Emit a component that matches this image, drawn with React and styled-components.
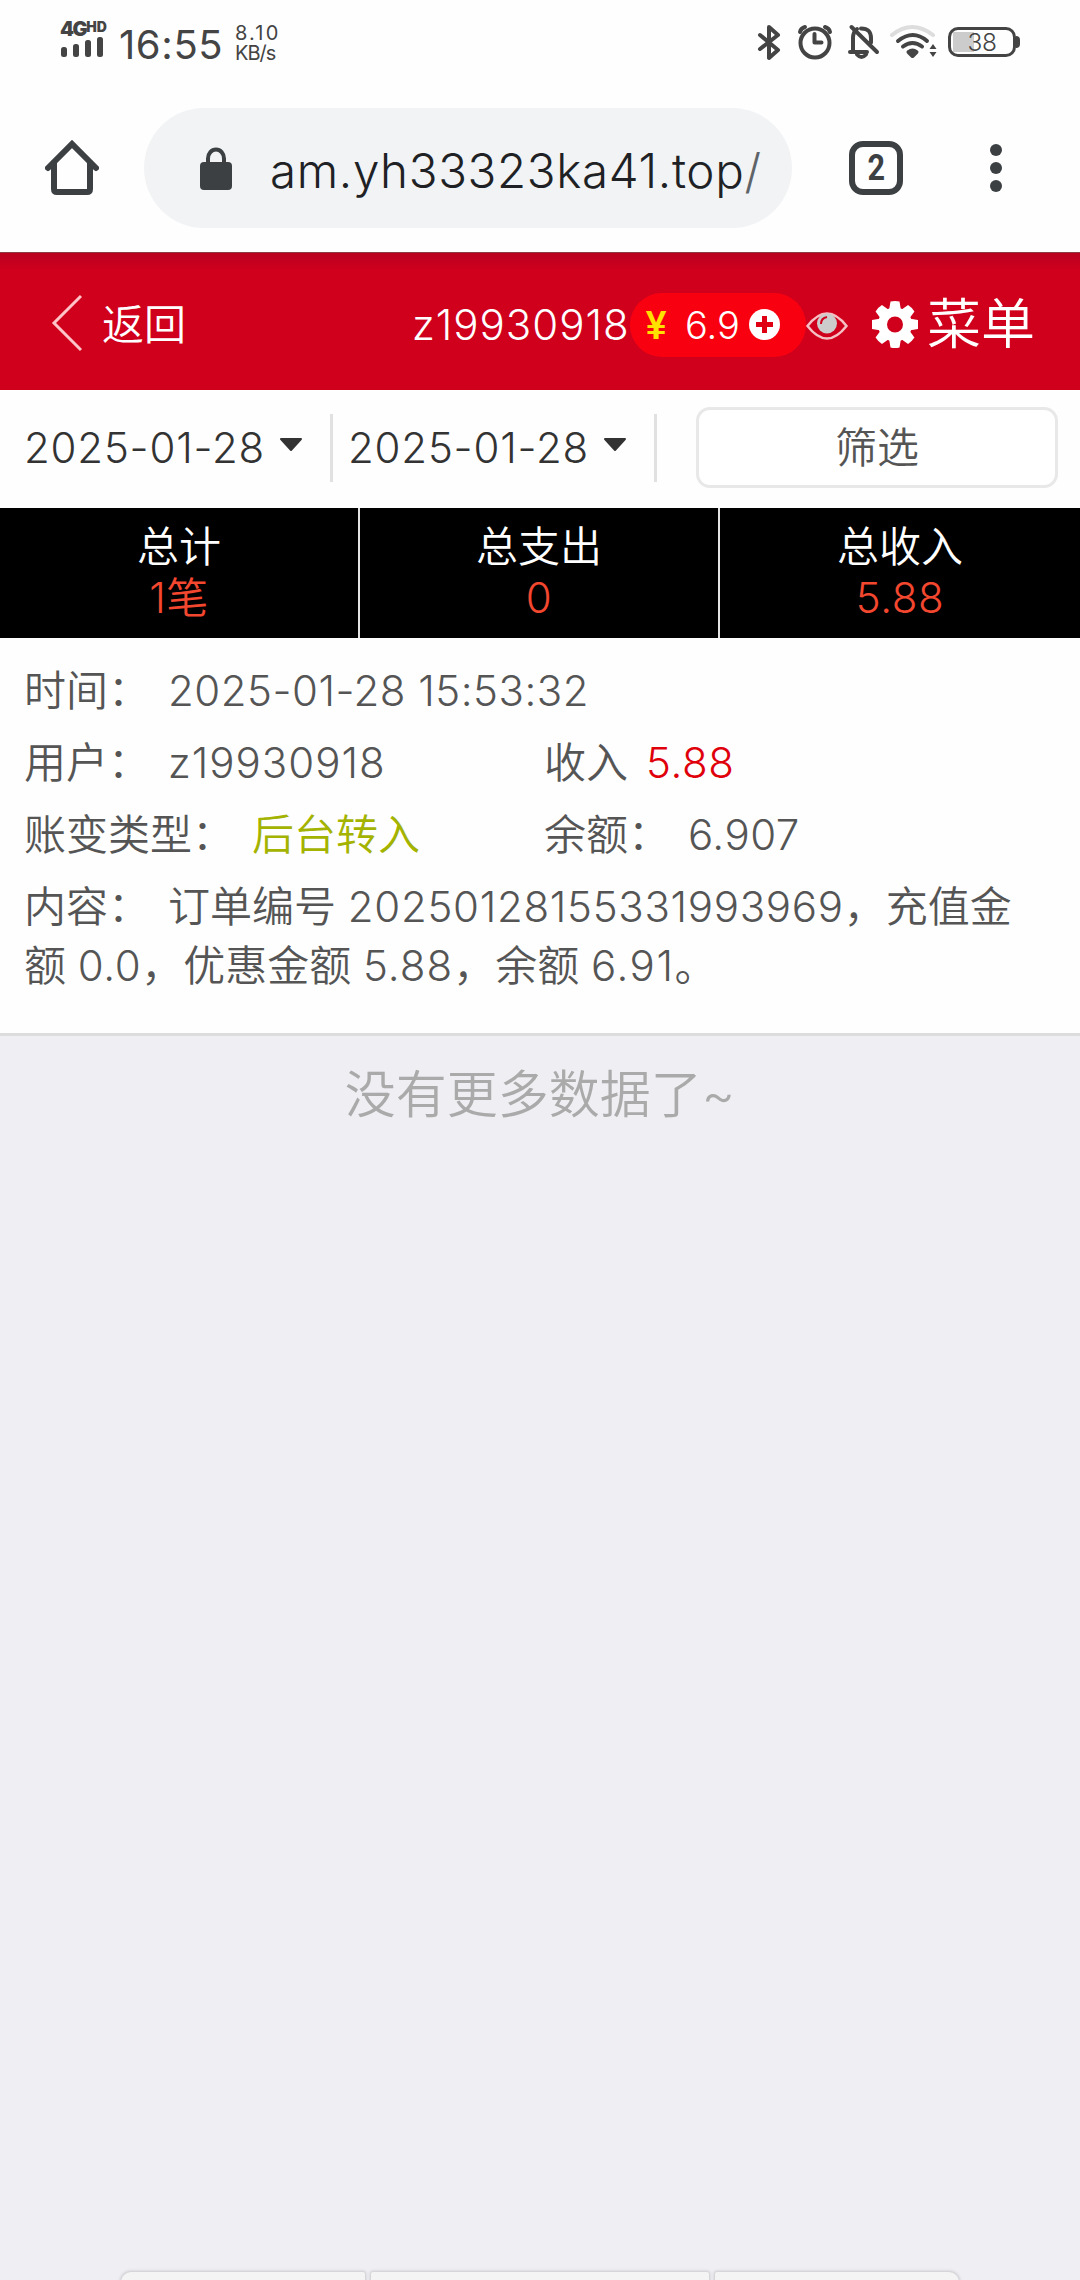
import React from "react";
import styled, { createGlobalStyle } from "styled-components";

const GlobalStyle = createGlobalStyle`
  * {
    box-sizing: border-box;
  }

  body {
    margin: 0;
    background: #efeef3;
    font-family: Inter, "Noto Sans CJK SC", sans-serif;
    font-weight: 350;
  }
`;

const Page = styled.div`
  display: flex;
  flex-direction: column;
  width: 1080px;
  height: 2280px;
  overflow: hidden;
`;

const Text = styled.span`
  color: ${({ color }) => color || "inherit"};
  letter-spacing: ${({ $spacing }) => $spacing || 0}px;
  white-space: pre;
`;

/* status bar */

const StatusBar = styled.div`
  display: flex;
  height: 88px;
  padding: 20px 65px 0 60px;
  background: #fefefe;
  color: #444;
`;

const Signal = styled.div`
  width: 59px;
`;

const Network = styled.div`
  display: flex;
  height: 17px;
  font-size: 20px;
  font-weight: 900;
  line-height: 19px;
  letter-spacing: -1.5px;

  sup {
    font-size: 14px;
    line-height: 13px;
    letter-spacing: 0;
    vertical-align: top;
  }
`;

const Clock = styled.div`
  width: 116px;
  font-size: 40px;
  font-weight: 400;
  line-height: 50px;
`;

const Speed = styled.div`
  flex: 1;
  padding-top: 4px;
  font-size: 20px;
  font-weight: 400;
  line-height: 19.5px;
`;

const StatusIcons = styled.svg`
  display: block;
  width: 200px;
  height: 44px;
  margin-right: -34px;
`;

const Battery = styled.div`
  display: flex;
  align-items: center;
  justify-content: center;
  position: relative;
  width: 68px;
  height: 30px;
  margin: 7px -1px 0 32px;
  border: 3px solid #444;
  border-radius: 10px;
  background: linear-gradient(#ccc, #ccc) 2px 2px / 21px 20px no-repeat;
  font-size: 24.5px;
  letter-spacing: -0.5px;
  line-height: 24px;

  &::after {
    content: "";
    position: absolute;
    right: -7px;
    top: 6px;
    width: 4px;
    height: 12px;
    border-radius: 0 4px 4px 0;
    background: #444;
  }
`;

/* browser bar */

const BrowserBar = styled.div`
  display: flex;
  align-items: center;
  height: 164px;
  padding: 0 66px 4px 45px;
  background: #fefefe;
`;

const HomeIcon = styled.svg`
  width: 54px;
  height: 56px;
`;

const AddressBar = styled.div`
  display: flex;
  align-items: center;
  width: 648px;
  height: 120px;
  margin-left: 45px;
  padding-left: 56px;
  border-radius: 60px;
  background: #f1f3f5;
  color: #202124;
  font-size: 47.5px;
  line-height: 60px;
`;

const LockIcon = styled.svg`
  width: 32px;
  height: 43px;
  margin-right: 38px;
`;

const Url = styled.div`
  padding-top: 5px;
  letter-spacing: 0.65px;
  white-space: nowrap;
`;

const TabCount = styled.div`
  display: flex;
  align-items: center;
  justify-content: center;
  width: 54px;
  height: 54px;
  margin-left: 57px;
  border: 6px solid #3c4043;
  border-radius: 14px;
  color: #3c4043;
  font-family: Roboto, sans-serif;
  font-size: 36px;
  font-weight: 700;

  span {
    transform: scaleX(0.85);
  }
`;

const Dots = styled.div`
  display: flex;
  flex-direction: column;
  gap: 6px;
  margin-left: 87px;

  i {
    width: 12px;
    height: 12px;
    border-radius: 50%;
    background: #3c4043;
  }
`;

/* red header */

const Header = styled.header`
  display: flex;
  align-items: center;
  height: 138px;
  padding: 6px 0 0 50px;
  border-top: 1px solid #8d3a42;
  background: linear-gradient(#b90020, #d0001d 18px);
  color: #fff;
  font-size: 42px;
  line-height: 60px;
`;

const BackIcon = styled.svg`
  width: 32px;
  height: 58px;
  margin-top: -3px;
`;

const Back = styled.div`
  width: 330px;
  padding-left: 20px;
`;

const UserName = styled.div`
  width: 218px;
  white-space: nowrap;
`;

const Balance = styled.div`
  display: flex;
  align-items: center;
  width: 176px;
  height: 64px;
  padding-left: 14px;
  border-radius: 32px;
  background: #f90010;
  font-size: 38px;
`;

const Yen = styled.span`
  width: 41px;
  padding-left: 1px;
  color: #ffe100;
  font-family: "Liberation Sans", sans-serif;
  font-size: 40px;
  font-weight: 700;

  b {
    display: inline-block;
    transform: scaleX(0.93);
  }
`;

const Amount = styled.span`
  width: 64px;
`;

const PlusIcon = styled.svg`
  width: 31px;
  height: 31px;
`;

const EyeIcon = styled.svg`
  width: 42px;
  height: 28px;
  margin: 3px 24px 0 0;
`;

const GearIcon = styled.svg`
  width: 46px;
  height: 47px;
  margin-right: 9px;
`;

const Menu = styled.div`
  font-size: 54px;
`;

/* filter row */

const Filters = styled.div`
  display: flex;
  align-items: center;
  height: 118px;
  padding: 0 22px 4px 0;
  background: #fefefe;
  color: #333;
`;

const DateSelect = styled.div`
  display: flex;
  align-items: center;
  width: ${({ $width }) => $width}px;
  height: 68px;
  margin-top: 2px;
  padding-left: ${({ $left }) => $left}px;
  border-right: 3px solid #e1e1e1;
  font-size: 42px;
  line-height: 60px;

  ${Text} {
    width: 242px;
  }

  svg {
    width: 24px;
    height: 14px;
    margin: -6px 0 0 13px;
  }
`;

const FilterButton = styled.button`
  flex: 1;
  height: 81px;
  margin-left: 39px;
  padding: 0 0 6px;
  border: 3px solid #e8e8e8;
  border-radius: 14px;
  background: #fff;
  color: #555;
  font: inherit;
  font-size: 42px;
`;

/* totals */

const Totals = styled.div`
  display: grid;
  grid-template-columns: repeat(3, 1fr);
  height: 130px;
  background: #000;
`;

const Total = styled.div`
  padding-top: 13px;
  border-right: 2px solid #e4e4e4;
  color: #fff;
  font-size: 42px;
  line-height: 51px;
  text-align: center;

  &:last-child {
    border-right: 0;
  }

  strong {
    display: block;
    color: #f4472f;
    font-weight: inherit;
    letter-spacing: 0.6px;
  }
`;

/* record */

const Record = styled.div`
  display: flex;
  flex-direction: column;
  gap: 13px;
  height: 398px;
  padding: 23px 40px 0 24px;
  border-bottom: 3px solid #dcdcdc;
  background: #fefefe;
  color: #555;
  font-size: 42px;
  line-height: 59px;
`;

const Line = styled.div`
  display: grid;
  grid-template-columns: ${({ $split }) => ($split ? "520px 1fr" : "1fr")};
  white-space: nowrap;
`;

const Label = styled.span`
  margin-right: 18px;
`;

const NoMore = styled.div`
  padding-top: 25px;
  color: #aaa;
  font-size: 51px;
  line-height: 68px;
  text-align: center;
`;

const BottomTabs = styled.div`
  display: grid;
  grid-template-columns: 244px 338px 244px;
  gap: 6px;
  height: 8px;
  margin: auto 121px 0;
`;

const BottomTab = styled.div`
  height: 60px;
  border-radius: ${({ $radius }) => $radius || "2px"};
  background: #f4f4f4;
  box-shadow: 0 0 3px 1px #c8c8cc;
`;

const totals = [
  { name: "总计", value: "1笔" },
  { name: "总支出", value: "0" },
  { name: "总收入", value: "5.88" },
];

function Caret() {
  return (
    <svg viewBox="0 0 24 14">
      <path d="M2 1h20L12 12z" fill="#333" stroke="#333" strokeWidth="2" strokeLinejoin="round" />
    </svg>
  );
}

function Status() {
  return (
    <StatusBar>
      <Signal>
        <Network>4G<sup>HD</sup></Network>
        <svg width="44" height="21" viewBox="0 0 44 21" fill="#444" display="block">
          <rect x="1" y="10" width="6" height="10" rx="2.5" />
          <rect x="13" y="7" width="6" height="13" rx="2.5" />
          <rect x="25" y="3" width="6" height="17" rx="2.5" />
          <rect x="37" y="0" width="6" height="20" rx="2.5" />
        </svg>
      </Signal>
      <Clock><Text $spacing={0.6}>16:55</Text></Clock>
      <Speed>
        <div><Text $spacing={2.2}>8.10</Text></div>
        <div><Text $spacing={-1}>KB/s</Text></div>
      </Speed>
      <StatusIcons viewBox="750 20 200 44" fill="none" stroke="#444" strokeWidth="4" strokeLinecap="round" strokeLinejoin="round">
        <path d="M760 35l18 15-9 8V27l9 8-18 14" />
        <circle cx="815" cy="43" r="14.5" />
        <path d="M814.500 34v8.500h7" />
        <path d="M800 32q1-4 5-5M830 32q-1-4-5-5" />
        <path d="M853 52V38q0-6 4-9M861 28.500c8 0 10 4 10 10v4M850 52h17" />
        <path d="M857 54.500q4.500 5 9 0" />
        <path d="M851.500 27l25.500 25" />
        <path d="M892 35q20-16 41 0" stroke="#ddd" />
        <path d="M898 41q15-12 29 0M903 46.500q9.500-7 19 0" />
        <path d="M908.500 52q4-3 8 0l-4 4z" fill="#444" />
        <path d="M929.500 49h7l-3.500-5zM929.500 52h7l-3.500 5z" fill="#444" stroke="none" />
      </StatusIcons>
      <Battery>38</Battery>
    </StatusBar>
  );
}

function Browser() {
  return (
    <BrowserBar>
      <HomeIcon viewBox="0 0 54 56" fill="none" stroke="#3c4043" strokeWidth="6" strokeLinecap="round">
        <path d="M3 28L27 4l24 24" />
        <path d="M9 23v26q0 3 3 3h30q3 0 3-3V23" />
      </HomeIcon>
      <AddressBar>
        <LockIcon viewBox="0 0 32 43">
          <path d="M8 18V11.500a8 9 0 0 1 16 0V18" fill="none" stroke="#3c4043" strokeWidth="4" />
          <rect y="15" width="32" height="28" rx="4" fill="#3c4043" />
        </LockIcon>
        <Url>am.yh33323ka41.top<Text color="#5f6368">/</Text></Url>
      </AddressBar>
      <TabCount><span>2</span></TabCount>
      <Dots><i /><i /><i /></Dots>
    </BrowserBar>
  );
}

function SiteHeader() {
  return (
    <Header>
      <BackIcon viewBox="0 0 32 58">
        <path d="M31 2L4 29l27 27" fill="none" stroke="#ffc4c8" strokeWidth="3" />
      </BackIcon>
      <Back>返回</Back>
      <UserName><Text $spacing={1}>z19930918</Text></UserName>
      <Balance>
        <Yen><b>¥</b></Yen>
        <Amount>6.9</Amount>
        <PlusIcon viewBox="0 0 31 31">
          <circle cx="15.500" cy="15.500" r="15.500" fill="#fff" />
          <path d="M15.500 7v17M7 15.500h17" stroke="#e00014" strokeWidth="5" />
        </PlusIcon>
      </Balance>
      <EyeIcon viewBox="0 0 42 28">
        <path d="M1.500 14Q21-11 40.500 14 21 39 1.500 14z" fill="none" stroke="#f5c0c4" strokeWidth="2.500" />
        <circle cx="21" cy="11.500" r="10" fill="#ccc" />
        <path d="M15 12q0-6 6-7" fill="none" stroke="#d0001d" strokeWidth="2" />
      </EyeIcon>
      <GearIcon viewBox="-23 -23.500 46 47" fill="#fff">
        {[0, 45, 90, 135, 180, 225, 270, 315].map(deg => (
          <path key={deg} d="M-6-14l1.500-9q4.500-1 9 0L6-14z" transform={`rotate(${deg})`} />
        ))}
        <circle r="12.500" fill="none" stroke="#fff" strokeWidth="9" />
      </GearIcon>
      <Menu>菜单</Menu>
    </Header>
  );
}

function App() {
  return (
    <>
      <GlobalStyle />
      <Page>
        <Status />
        <Browser />
        <SiteHeader />
        <Filters>
          <DateSelect $width={333} $left={24}>
            <Text $spacing={0.8}>2025-01-28</Text>
            <Caret />
          </DateSelect>
          <DateSelect $width={324} $left={15}>
            <Text $spacing={0.8}>2025-01-28</Text>
            <Caret />
          </DateSelect>
          <FilterButton>筛选</FilterButton>
        </Filters>
        <Totals>
          {totals.map(({ name, value }) => (
            <Total key={name}>
              {name}
              <strong>{value}</strong>
            </Total>
          ))}
        </Totals>
        <Record>
          <Line>
            <div><Label>时间：</Label><Text $spacing={0.5}>2025-01-28 15:53:32</Text></div>
          </Line>
          <Line $split>
            <div><Label>用户：</Label><Text $spacing={1}>z19930918</Text></div>
            <div><Label>收入</Label><Text color="#e0000b" $spacing={0.6}>5.88</Text></div>
          </Line>
          <Line $split>
            <div><Label>账变类型：</Label><Text color="#a3b300">后台转入</Text></div>
            <div><Label>余额：</Label><Text $spacing={0.5}>6.907</Text></div>
          </Line>
          <div>
            <Line>
              <div><Label>内容：</Label>订单编号 <Text $spacing={0.7}>20250128155331993969</Text>，充值金</div>
            </Line>
            <Line>
              <div>
                额 <Text $spacing={0.6}>0.0</Text>，优惠金额 <Text $spacing={1}>5.88</Text>，余额 <Text $spacing={1.6}>6.91</Text>。
              </div>
            </Line>
          </div>
        </Record>
        <NoMore>没有更多数据了~</NoMore>
        <BottomTabs>
          <BottomTab $radius="10px 2px 2px 10px" />
          <BottomTab />
          <BottomTab $radius="2px 10px 10px 2px" />
        </BottomTabs>
      </Page>
    </>
  );
}

export default App;
